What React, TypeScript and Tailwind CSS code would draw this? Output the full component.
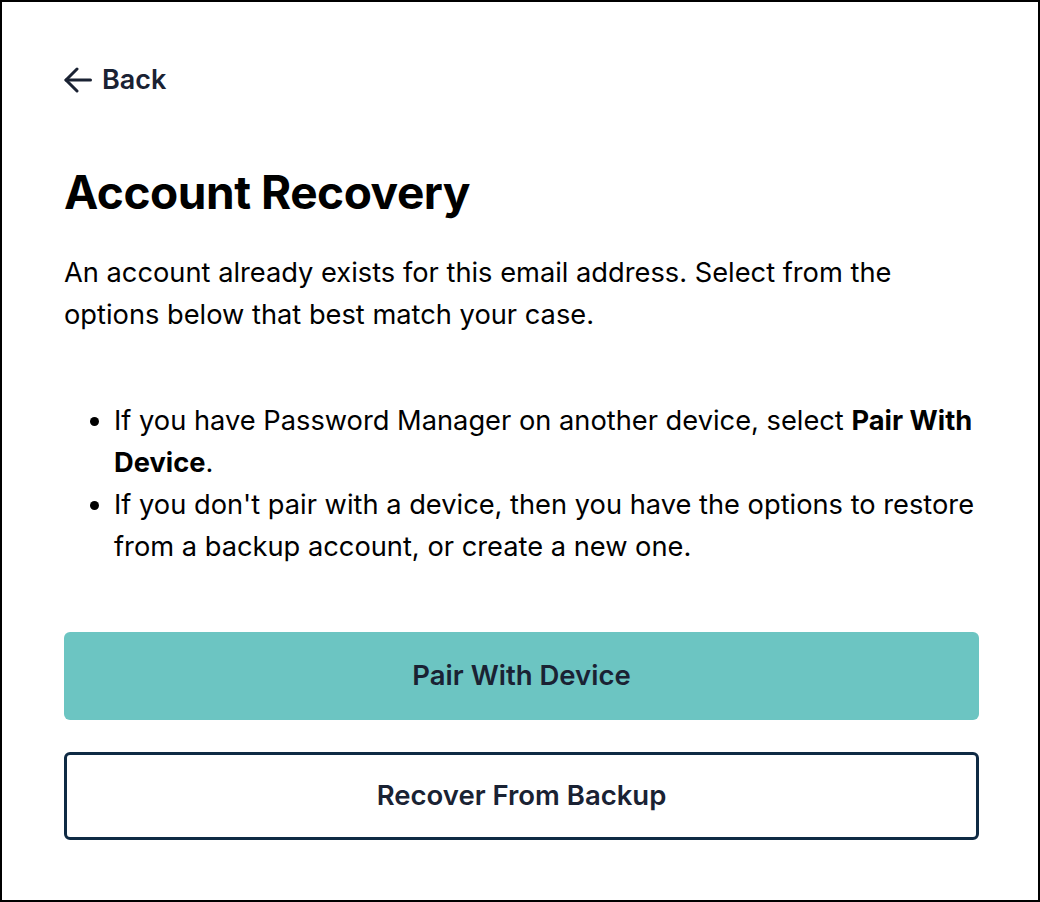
export default function App() {
  return (
    <div
      className="w-[1040px] h-[902px] border-2 border-black bg-white pl-[62px] pr-[59px] text-[#1a2233]"
      style={{ fontFamily: 'Inter, "Noto Sans", sans-serif' }}
    >
      <button className="mt-[60px] flex items-center gap-[10px] text-[27px] font-semibold leading-9 text-[#1a2233]">
        <svg width="28" height="26" viewBox="0 0 28 26" fill="none" stroke="currentColor" strokeWidth="3" strokeLinecap="round" strokeLinejoin="round">
          <path d="M26.5 13H2" />
          <path d="M13 2 2 13l11 11" />
        </svg>
        Back
      </button>

      <h1 className="mt-[68px] text-[46px] font-bold leading-[52px] text-black tracking-[-0.01em]">
        Account Recovery
      </h1>

      <p className="mt-[34px] text-[27.25px] leading-[42px] text-black">
        An account already exists for this email address. Select from the options below that best match your case.
      </p>

      <ul className="mt-[64px] list-disc pl-[50px] text-[27.25px] leading-[42px] text-black">
        <li>
          If you have Password Manager on another device, select <strong className="font-bold">Pair With Device</strong>.
        </li>
        <li>
          If you don't pair with a device, then you have the options to restore from a backup account, or create a new one.
        </li>
      </ul>

      <div className="mt-[64px] flex flex-col gap-[32px]">
        <button className="h-[88px] w-full rounded-md bg-[#6cc5c2] text-[27.5px] font-semibold text-[#1a2233]">
          Pair With Device
        </button>
        <button className="h-[88px] w-full rounded-md border-[3px] border-[#0f2a44] bg-white text-[27.5px] font-semibold text-[#1a2233]">
          Recover From Backup
        </button>
      </div>
    </div>
  );
}
